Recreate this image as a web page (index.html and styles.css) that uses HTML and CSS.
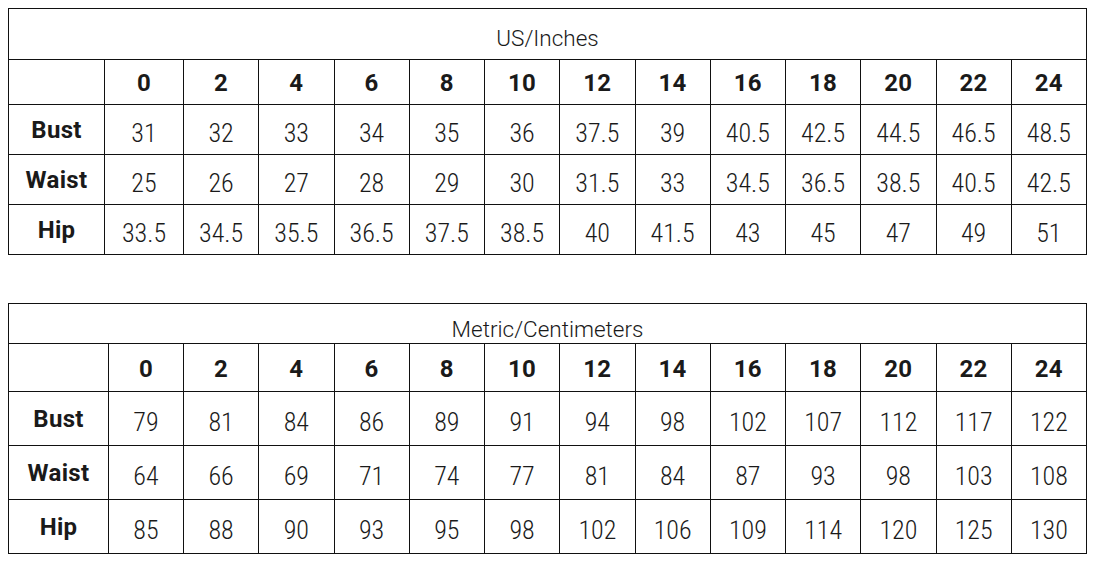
FILE: index.html
```html
<!DOCTYPE html>
<html>
<head>
<meta charset="utf-8">
<link rel="stylesheet" href="styles.css">
</head>
<body>
<div class="page">
<table class="size us">
  <colgroup><col class="c-label"><col class="c-first"><col span="12"></colgroup>
  <tr class="title"><td colspan="14">US/Inches</td></tr>
  <tr class="head"><td></td><th>0</th><th>2</th><th>4</th><th>6</th><th>8</th><th>10</th><th>12</th><th>14</th><th>16</th><th>18</th><th>20</th><th>22</th><th>24</th></tr>
  <tr class="row"><th>Bust</th><td>31</td><td>32</td><td>33</td><td>34</td><td>35</td><td>36</td><td>37.5</td><td>39</td><td>40.5</td><td>42.5</td><td>44.5</td><td>46.5</td><td>48.5</td></tr>
  <tr class="row"><th>Waist</th><td>25</td><td>26</td><td>27</td><td>28</td><td>29</td><td>30</td><td>31.5</td><td>33</td><td>34.5</td><td>36.5</td><td>38.5</td><td>40.5</td><td>42.5</td></tr>
  <tr class="row"><th>Hip</th><td>33.5</td><td>34.5</td><td>35.5</td><td>36.5</td><td>37.5</td><td>38.5</td><td>40</td><td>41.5</td><td>43</td><td>45</td><td>47</td><td>49</td><td>51</td></tr>
</table>
<table class="size metric">
  <colgroup><col class="c-label"><col class="c-first"><col span="12"></colgroup>
  <tr class="title"><td colspan="14">Metric/Centimeters</td></tr>
  <tr class="head"><td></td><th>0</th><th>2</th><th>4</th><th>6</th><th>8</th><th>10</th><th>12</th><th>14</th><th>16</th><th>18</th><th>20</th><th>22</th><th>24</th></tr>
  <tr class="row"><th>Bust</th><td>79</td><td>81</td><td>84</td><td>86</td><td>89</td><td>91</td><td>94</td><td>98</td><td>102</td><td>107</td><td>112</td><td>117</td><td>122</td></tr>
  <tr class="row"><th>Waist</th><td>64</td><td>66</td><td>69</td><td>71</td><td>74</td><td>77</td><td>81</td><td>84</td><td>87</td><td>93</td><td>98</td><td>103</td><td>108</td></tr>
  <tr class="row"><th>Hip</th><td>85</td><td>88</td><td>90</td><td>93</td><td>95</td><td>98</td><td>102</td><td>106</td><td>109</td><td>114</td><td>120</td><td>125</td><td>130</td></tr>
</table>
</div>
</body>
</html>
```
FILE: styles.css
```css
html, body {
  margin: 0;
  padding: 0;
  background: #ffffff;
}
.page {
  padding: 8px 0 0 8px;
  display: flex;
  flex-direction: column;
  gap: 48px;
}
.size {
  border-collapse: collapse;
  table-layout: fixed;
  width: 1079px;
  font-family: "Roboto Condensed", "Liberation Sans Narrow", sans-serif;
  color: #1a1a1a;
}
.size td, .size th {
  border: 1px solid #111;
  text-align: center;
  vertical-align: middle;
  padding: 0;
  line-height: 26px;
  overflow: hidden;
  white-space: nowrap;
}
.size td {
  font-weight: 300;
  font-size: 26px;
  padding-top: 6px;
}
.size th {
  font-family: Roboto, sans-serif;
  font-weight: 700;
  font-size: 24px;
  letter-spacing: 0.3px;
  padding-top: 0;
}
.size .head th {
  padding-top: 2px;
}
.size .title td {
  font-family: Roboto, sans-serif;
  font-size: 22.5px;
  font-weight: 300;
}
.us .title td { padding-top: 8px; }
.metric .title td { padding-top: 10px; }
.us .c-label { width: 96px; }
.us .c-first { width: 79px; }
.metric .c-label { width: 100px; }
.metric .c-first { width: 75px; }
.us .title { height: 51px; }
.us .head { height: 45px; }
.us .row { height: 50px; }
.metric .title { height: 40px; }
.metric .head { height: 48px; }
.metric .row { height: 54px; }
```
